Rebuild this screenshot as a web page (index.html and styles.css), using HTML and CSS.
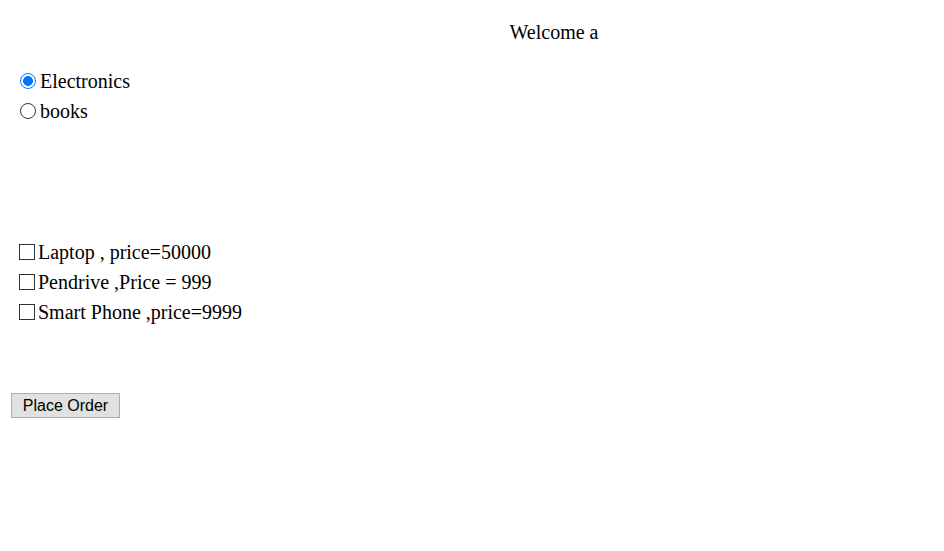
FILE: index.html
```html
<!DOCTYPE html>
<html>
<head>
<meta charset="utf-8">
<link rel="stylesheet" href="styles.css">
</head>
<body>
<div class="welcome">Welcome a</div>
<form class="order">
  <div class="categories">
    <label class="choice"><input type="radio" name="cat" class="radio" checked>Electronics</label>
    <label class="choice"><input type="radio" name="cat" class="radio">books</label>
  </div>
  <div class="items">
    <label class="choice"><input type="checkbox" class="check">Laptop , price=50000</label>
    <label class="choice"><input type="checkbox" class="check">Pendrive ,Price = 999</label>
    <label class="choice"><input type="checkbox" class="check">Smart Phone ,price=9999</label>
  </div>
  <button type="button" class="place">Place Order</button>
</form>
</body>
</html>
```
FILE: styles.css
```css
html, body {
  background: #fff;
}
body {
  margin: 10px;
  font-family: "Liberation Serif", "Times New Roman", serif;
  font-size: 20px;
  color: #000;
}
.welcome {
  padding-left: 164px;
  text-align: center;
  line-height: 23px;
  padding-top: 11px;
}
.order {
  display: flex;
  flex-direction: column;
  align-items: flex-start;
}
.categories {
  display: flex;
  flex-direction: column;
  padding-top: 22px;
  padding-left: 10px;
}
.items {
  display: flex;
  flex-direction: column;
  padding-top: 111px;
  padding-left: 9px;
}
.choice {
  display: flex;
  align-items: center;
  height: 30px;
}
.radio {
  appearance: none;
  -webkit-appearance: none;
  box-sizing: border-box;
  width: 16px;
  height: 16px;
  margin: 0 4px 0 0;
  border: 1.5px solid #333;
  border-radius: 50%;
  background: #fff;
}
.radio:checked {
  border: 1.5px solid #0075ff;
  background: radial-gradient(circle, #0075ff 0 4.6px, #fff 5.2px);
}
.check {
  appearance: none;
  -webkit-appearance: none;
  box-sizing: border-box;
  width: 16px;
  height: 16px;
  margin: 0 3px 0 0;
  border: 1px solid #333;
  background: #fff;
  border-radius: 0;
}
.place {
  margin-top: 66px;
  margin-left: 1px;
  height: 25px;
  width: 109px;
  padding: 0;
  font-family: "Liberation Sans", Arial, sans-serif;
  font-size: 16px;
  color: #000;
  background: #e1e1e1;
  border: 1px solid #adadad;
  border-radius: 0;
}
```
